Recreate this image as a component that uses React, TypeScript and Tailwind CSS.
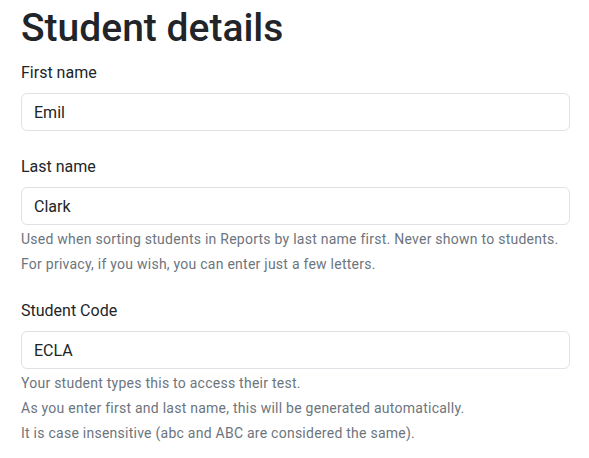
export default function App() {
  return (
    <div className="min-h-screen bg-white pl-[21px] pr-[19px] pt-[4px] text-[#212529]" style={{ fontFamily: 'Roboto, "Liberation Sans", sans-serif' }}>
      <h1 className="mb-2 text-[39px] font-medium leading-[49px]">Student details</h1>

      <div className="mb-6">
        <label className="mb-2 block text-base leading-6">First name</label>
        <input
          className="block h-[38px] w-full rounded-md border border-[#dee2e6] px-3 text-base text-[#212529] outline-none"
          defaultValue="Emil"
        />
      </div>

      <div className="mb-6">
        <label className="mb-2 block text-base leading-6">Last name</label>
        <input
          className="block h-[38px] w-full rounded-md border border-[#dee2e6] px-3 text-base text-[#212529] outline-none"
          defaultValue="Clark"
        />
        <div className="mt-1 text-sm leading-[21px] tracking-[0.25px] text-[#6c757d]">
          Used when sorting students in Reports by last name first. Never shown to students.
        </div>
        <div className="mt-1 text-sm leading-[21px] tracking-[0.25px] text-[#6c757d]">
          For privacy, if you wish, you can enter just a few letters.
        </div>
      </div>

      <div className="mb-6">
        <label className="mb-2 block text-base leading-6">Student Code</label>
        <input
          className="block h-[38px] w-full rounded-md border border-[#dee2e6] px-3 text-base text-[#212529] outline-none"
          defaultValue="ECLA"
        />
        <div className="mt-1 text-sm leading-[21px] tracking-[0.25px] text-[#6c757d]">Your student types this to access their test.</div>
        <div className="mt-1 text-sm leading-[21px] tracking-[0.25px] text-[#6c757d]">
          As you enter first and last name, this will be generated automatically.
        </div>
        <div className="mt-1 text-sm leading-[21px] tracking-[0.25px] text-[#6c757d]">
          It is case insensitive (abc and ABC are considered the same).
        </div>
      </div>
    </div>
  )
}
